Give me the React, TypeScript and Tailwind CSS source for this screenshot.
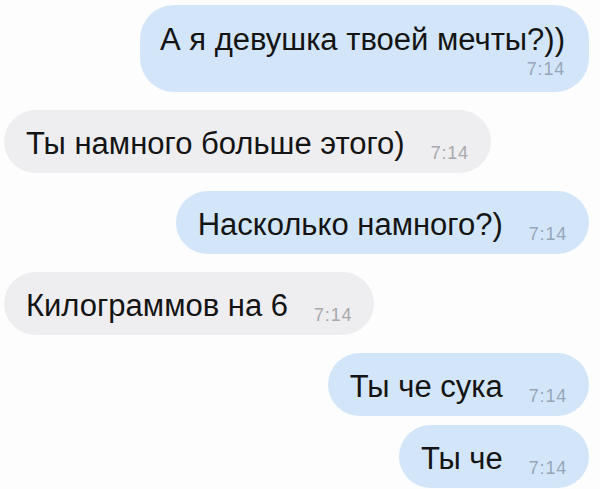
import React from "react";

type Msg = { text: string; time: string; mine: boolean; tight?: boolean };

const messages: Msg[] = [
  { text: "Ты намного больше этого)", time: "7:14", mine: false },
  { text: "Насколько намного?)", time: "7:14", mine: true },
  { text: "Килограммов на 6", time: "7:14", mine: false },
  { text: "Ты че сука", time: "7:14", mine: true },
  { text: "Ты че", time: "7:14", mine: true, tight: true },
];

function Bubble({ text, time, mine, tight }: Msg) {
  return (
    <div
      className={`flex items-end gap-[26px] rounded-[32px] h-[63px] pl-[22px] pr-[22px] pb-[11px] ${
        mine ? "self-end bg-[#d3e6f9]" : "self-start bg-[#eeeef1]"
      } ${tight ? "-mt-[9px]" : ""}`}
    >
      <span className="text-[31px] leading-[36px] text-[#141414]">{text}</span>
      <span
        className={`text-[18px] leading-[18px] tracking-[0.8px] ${mine ? "text-[#97a5b8]" : "text-[#a8a8ad]"}`}
      >
        {time}
      </span>
    </div>
  );
}

export default function App() {
  return (
    <div
      className="w-[600px] h-[489px] overflow-hidden bg-[#fdfdfd] flex flex-col gap-[18px] pt-[5px] pl-[4px] pr-[11px]"
      style={{ fontFamily: '"Liberation Sans", Arial, sans-serif' }}
    >
      {/* first message has the time under the text */}
      <div className="self-end flex flex-col items-end rounded-[34px] bg-[#d3e6f9] h-[87px] pl-[20px] pr-[24px] pt-[17px]">
        <span className="text-[31px] leading-[36px] text-[#141414]">А я девушка твоей мечты?))</span>
        <span className="text-[18px] leading-[18px] tracking-[0.8px] mt-[2px] text-[#97a5b8]">7:14</span>
      </div>
      {messages.map((m, i) => (
        <Bubble key={i} {...m} />
      ))}
    </div>
  );
}
